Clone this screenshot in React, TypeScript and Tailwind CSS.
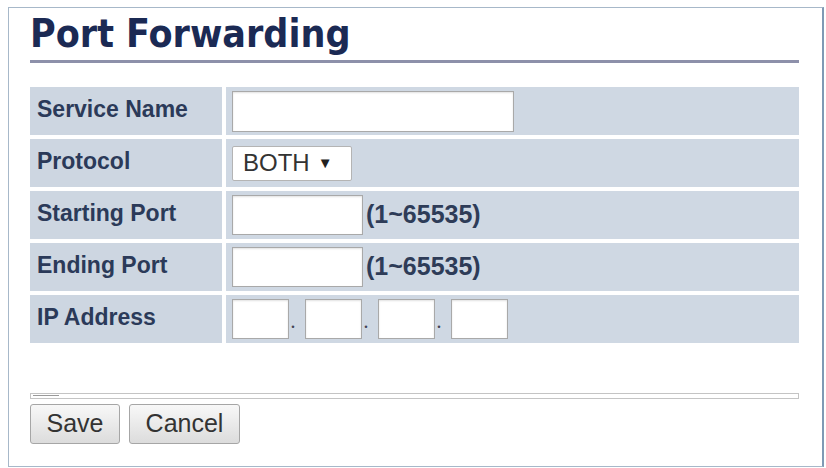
import React from 'react'

const labelCls =
  "flex items-center pl-[7px] pb-[3px] bg-[#cdd6e1] text-[23px] font-bold text-[#2b3a59] [font-family:'Liberation_Sans',Arial,sans-serif]"
const valueCls = 'flex items-center pl-[6px] bg-[#cfd8e3]'
const inputCls =
  'bg-white border border-[#a9a9a9] shadow-[inset_0_1px_2px_rgba(0,0,0,0.12)] outline-none'
const rangeCls =
  "ml-[3px] text-[25px] font-bold text-[#2e3c58] [font-family:'Liberation_Sans',Arial,sans-serif]"

function IpField() {
  return (
    <div className="flex items-center">
      <input className={`${inputCls} w-[57px] h-[40px]`} />
      <span className="w-[16px] pl-[2px] pt-[6px] text-left text-[14px] font-bold text-[#445]">.</span>
      <input className={`${inputCls} w-[57px] h-[40px]`} />
      <span className="w-[16px] pl-[2px] pt-[6px] text-left text-[14px] font-bold text-[#445]">.</span>
      <input className={`${inputCls} w-[57px] h-[40px]`} />
      <span className="w-[16px] pl-[2px] pt-[6px] text-left text-[14px] font-bold text-[#445]">.</span>
      <input className={`${inputCls} w-[57px] h-[40px]`} />
    </div>
  )
}

export default function App() {
  return (
    <div className="w-[826px] h-[468px] bg-white pt-[7px] pl-[8px]">
      <div className="w-[816px] h-[460px] border border-[#a7b8c9] border-r-2 border-r-[#7f9ab5] pl-[21px] pr-[23px]">
        {/* title */}
        <h1 className="pt-[3px] h-[52px] text-[39px] leading-[46px] font-bold text-[#1b2a54] [font-family:'DejaVu_Sans_Condensed','DejaVu_Sans',sans-serif]">
          Port Forwarding
        </h1>
        <div className="h-[3px] bg-[#8d90aa]" />

        {/* form table */}
        <div className="mt-[24px] grid grid-cols-[192px_1fr] auto-rows-[48px] gap-[4px]">
          <div className={labelCls}>Service Name</div>
          <div className={valueCls}>
            <input className={`${inputCls} w-[282px] h-[41px]`} />
          </div>

          <div className={labelCls}>Protocol</div>
          <div className={valueCls}>
            <div className="flex items-center w-[120px] h-[35px] bg-white border border-[#b4b4b4] rounded-[2px] pl-[10px] text-[24px] text-[#333] [font-family:'Liberation_Sans',Arial,sans-serif]">
              BOTH
              <span className="ml-[8px] text-[15px] text-[#222]">▼</span>
            </div>
          </div>

          <div className={labelCls}>Starting Port</div>
          <div className={valueCls}>
            <input className={`${inputCls} w-[131px] h-[40px]`} />
            <span className={rangeCls}>(1~65535)</span>
          </div>

          <div className={labelCls}>Ending Port</div>
          <div className={valueCls}>
            <input className={`${inputCls} w-[131px] h-[40px]`} />
            <span className={rangeCls}>(1~65535)</span>
          </div>

          <div className={labelCls}>IP Address</div>
          <div className={valueCls}>
            <IpField />
          </div>
        </div>

        {/* divider */}
        <div className="mt-[50px] relative h-[6px] border border-[#c4c4c4] bg-white">
          <div className="absolute left-[2px] top-[1px] w-[26px] h-[1px] bg-[#9a9a9a]" />
        </div>

        {/* buttons */}
        <div className="mt-[5px] flex gap-[9px] [font-family:'Liberation_Sans',Arial,sans-serif]">
          <button className="w-[90px] h-[40px] border border-[#a6a6a6] rounded-[3px] bg-gradient-to-b from-[#f8f8f8] to-[#dcdcdc] text-[25px] text-[#333]">
            Save
          </button>
          <button className="w-[111px] h-[40px] border border-[#a6a6a6] rounded-[3px] bg-gradient-to-b from-[#f8f8f8] to-[#dcdcdc] text-[25px] text-[#333]">
            Cancel
          </button>
        </div>
      </div>
    </div>
  )
}
